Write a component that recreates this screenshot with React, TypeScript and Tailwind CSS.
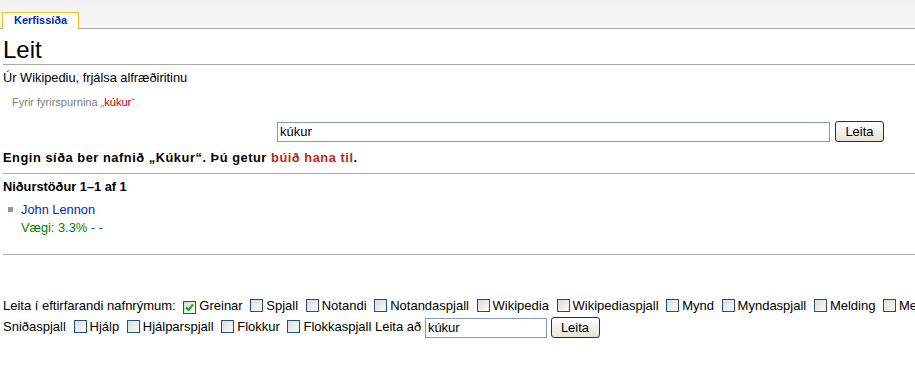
import React from "react";

const font = { fontFamily: '"Liberation Sans", Arial, sans-serif' };

function Check({ checked = false }: { checked?: boolean }) {
  return (
    <span className="inline-flex w-[13px] h-[13px] border border-[#1c5180] bg-gradient-to-br from-[#dcdcd7] to-[#fbfbfa] align-[-2px] ml-[4px] mr-[3px] items-center justify-center">
      {checked && (
        <svg width="9" height="9" viewBox="0 0 9 9">
          <path d="M1 4.5 L3.5 7 L8 1.5" fill="none" stroke="#21a121" strokeWidth="2" />
        </svg>
      )}
    </span>
  );
}

function XpButton({ children }: { children: React.ReactNode }) {
  return (
    <span className="inline-flex items-center justify-center w-[49px] h-[21px] rounded-[3px] border border-[#003c74] bg-gradient-to-b from-white to-[#e6e3d6] text-[13px] text-black leading-none">
      {children}
    </span>
  );
}

const spaces = [
  "Spjall",
  "Notandi",
  "Notandaspjall",
  "Wikipedia",
  "Wikipediaspjall",
  "Mynd",
  "Myndaspjall",
  "Melding",
  "Meldingarspjall",
  "Snið",
];

const spaces2 = ["Hjálp", "Hjálparspjall", "Flokkur", "Flokkaspjall"];

export default function App() {
  return (
    <div className="w-[915px] h-[387px] overflow-hidden bg-white text-black" style={font}>
      <div className="w-[1100px]">
        {/* top strip with tab */}
        <div className="h-[29px] bg-gradient-to-b from-[#f2f2f2] to-[#f7f7f7] border-b border-[#aaaaaa] flex items-end pl-[2px]">
          <div className="h-[17px] mb-[-1px] px-[11px] bg-white border border-b-0 border-[#fabd23] text-[11px] font-bold text-[#002bb8] leading-[15px]">
            Kerfissíða
          </div>
        </div>

        <div className="px-[3px]">
          <h1 className="text-[24px] leading-[28px] pt-[7px] border-b border-[#aaaaaa]">Leit</h1>
          <div className="text-[12.8px] leading-[18px] pt-[4px]">Úr Wikipediu, frjálsa alfræðiritinu</div>
          <div className="text-[11px] text-[#7d7d7d] pl-[9px] pt-[8px] leading-[14px]">
            Fyrir fyrirspurnina „<span className="text-[#ba0000]">kúkur</span>“
          </div>

          <div className="flex items-center pl-[274px] pt-[12px] gap-[5px]">
            <div className="w-[553px] h-[20px] border border-[#7f9db9] text-[13px] leading-[18px] px-[2px]">kúkur</div>
            <XpButton>Leita</XpButton>
          </div>

          <div className="text-[12.8px] font-bold tracking-[0.55px] leading-[18px] pt-[7px] pb-[6px] border-b border-[#aaaaaa]">
            Engin síða ber nafnið „Kúkur“. Þú getur <span className="text-[#ba2b16]">búið hana til</span>.
          </div>

          <div className="text-[12.8px] font-bold leading-[18px] pt-[4px]">Niðurstöður 1–1 af 1</div>
          <div className="flex pt-[5px] pl-[5px]">
            <span className="w-[5px] h-[5px] bg-[#8d9aab] mt-[6px] mr-[8px]"></span>
            <div className="text-[12.8px] leading-[18px]">
              <div className="text-[#002bb8]">John Lennon</div>
              <div className="text-[#008000]">Vægi: 3.3% - -</div>
            </div>
          </div>
          <div className="border-b border-[#aaaaaa] mt-[17px]"></div>

          <div className="text-[13px] leading-[21px] pt-[40px]">
            <div className="whitespace-nowrap">
              Leita í eftirfarandi nafnrýmum:{" "}
              <Check checked />Greinar{" "}
              {spaces.map((s) => (
                <React.Fragment key={s}>
                  <Check />
                  {s}{" "}
                </React.Fragment>
              ))}
              <Check />
            </div>
            <div className="whitespace-nowrap">
              Sniðaspjall{" "}
              {spaces2.map((s) => (
                <React.Fragment key={s}>
                  <Check />
                  {s}{" "}
                </React.Fragment>
              ))}
              Leita að{" "}
              <span className="inline-block w-[122px] h-[20px] border border-[#7f9db9] leading-[18px] px-[2px] align-middle">kúkur</span>{" "}
              <span className="inline-block align-middle"><XpButton>Leita</XpButton></span>
            </div>
          </div>
        </div>
      </div>
    </div>
  );
}
